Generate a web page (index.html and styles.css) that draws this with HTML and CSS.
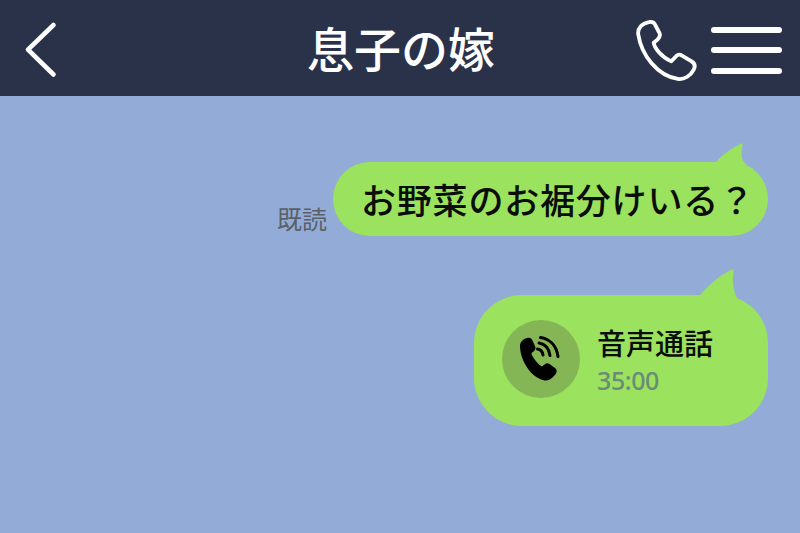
FILE: index.html
```html
<!DOCTYPE html>
<html lang="ja">
<head>
<meta charset="utf-8">
<title>息子の嫁</title>
<link rel="stylesheet" href="styles.css">
</head>
<body>
<div class="app">
  <header class="header">
    <svg class="back" width="34" height="58" viewBox="0 0 34 58"><path d="M29.500 4 L4 28.700 L29.500 53.500" fill="none" stroke="#fff" stroke-width="4.600" stroke-linecap="round" stroke-linejoin="round"/></svg>
    <h1 class="title">息子の嫁</h1>
    <div class="actions">
      <svg class="call" width="64" height="62" viewBox="0 0 60 60" preserveAspectRatio="none"><path d="M4 14 C3 8 8 3 14 2 C17 1.500 19 2.500 20 5 L24 13 C25 15.500 24 17 22 19 L18.500 22 C19 27 26 36 35 40 L39.500 35 C41 33.500 43 33 45 34.500 L54 40 C57 42 57.500 45 56 48 C53 54 47 58 41 57 C22 54 7 34 4 14 Z" fill="none" stroke="#fff" stroke-width="3.600" stroke-linejoin="round"/></svg>
      <div class="menu"><span class="bar"></span><span class="bar"></span><span class="bar"></span></div>
    </div>
  </header>
  <main class="chat">
    <div class="row">
      <span class="read">既読</span>
      <div class="bubble text-bubble">
        <svg class="tail" width="40" height="30" viewBox="0 0 40 30"><path d="M2 19 C8 12 18 5 26 1 C28 0 29 1 28.500 3 C27 9 27 15 30 19 C32 22 35 24 40 26 L2 30 Z" fill="#9be25e"/></svg>
        <p class="msg">お野菜のお裾分けいる？</p>
      </div>
    </div>
    <div class="row">
      <div class="bubble call-bubble">
        <svg class="tail" width="50" height="50" viewBox="0 0 50 50"><path d="M2 27 C10 18 22 7 33 2 C35 1 36 2 35.500 4 C34 12 35 20 38 28 C40 32 44 36 48 40 L2 45 Z" fill="#9be25e"/></svg>
        <div class="call-icon">
          <svg width="46" height="46" viewBox="0 0 46 46">
            <path d="M2 10 C2 6 5 3 9 2 C12 1 13.500 2.500 14.500 4.500 L17 10 C18 12 17.500 14 15.500 15.500 L13.500 17 C13.500 20 20 29 24 30.500 L26.500 28.500 C28.500 27 30 27 31.500 28 L37 32 C39 33.500 39 35.500 38 37.500 C35 42 31 45 26.500 44.500 C13 42 2 24 2 10 Z" fill="#000"/>
            <g fill="none" stroke="#000" stroke-width="3" stroke-linecap="round">
              <path d="M19.500 13 C22.500 13.500 24.500 15.500 25 19"/>
              <path d="M21 7 C27 8 31 12.500 32 19.500"/>
              <path d="M22.500 1.500 C32 3 38.500 10 40 20.500"/>
            </g>
          </svg>
        </div>
        <div class="call-info">
          <span class="call-label">音声通話</span>
          <span class="call-time">35:00</span>
        </div>
      </div>
    </div>
  </main>
</div>
</body>
</html>
```
FILE: styles.css
```css
* { box-sizing: border-box; margin: 0; padding: 0; }
html, body { width: 800px; height: 533px; overflow: hidden; }
body { font-family: "Noto Sans CJK JP", "Noto Sans", sans-serif; background: #93acd7; }
.app { width: 800px; height: 533px; display: flex; flex-direction: column; }
.header {
  height: 96px; flex: none; background: #2a3249; color: #fff;
  display: grid; grid-template-columns: 1fr auto 1fr; align-items: center;
  padding: 0 18px 0 20px;
}
.back { display: block; margin-top: 3px; margin-left: 4px; }
.title { font-size: 47px; font-weight: 500; line-height: 1; margin-top: -4px; }
.actions { display: flex; align-items: center; gap: 13px; justify-self: end; }
.call { display: block; margin-top: 5px; }
.menu { width: 71px; height: 47px; margin-top: 4px; display: flex; flex-direction: column; justify-content: space-between; }
.bar { display: block; height: 6px; border-radius: 3px; background: #fff; }
.chat { flex: 1; display: flex; flex-direction: column; align-items: flex-end; padding: 66px 32px 0 0; gap: 59px; }
.row { display: flex; align-items: flex-end; gap: 6px; }
.read { font-size: 25px; line-height: 1; color: #5b6068; margin-bottom: 5px; }
.bubble { background: #9be25e; position: relative; }
.text-bubble { width: 435px; height: 74px; border-radius: 37px; display: flex; align-items: center; padding-left: 28px; padding-bottom: 2px; }
.msg { font-size: 35px; line-height: 1; color: #0a0d08; white-space: nowrap; font-weight: 500; letter-spacing: 0.8px; }
.tail { position: absolute; display: block; }
.text-bubble .tail { top: -19px; left: 381px; }
.call-bubble { width: 294px; height: 131px; border-radius: 48px; display: flex; align-items: center; padding-left: 28px; gap: 17px; }
.call-bubble .tail { top: -27px; left: 224px; }
.call-icon { width: 78px; height: 78px; border-radius: 50%; background: #85b656; display: flex; align-items: center; justify-content: center; margin-top: -3px; }
.call-info { display: flex; flex-direction: column; gap: 7px; margin-top: -1px; }
.call-label { font-size: 29px; line-height: 34px; color: #0a0d08; font-weight: 500; margin-top: -1px; }
.call-time { font-size: 25px; line-height: 28px; color: #6b8a78; font-weight: 500; letter-spacing: -0.4px; font-family: "Noto Sans", sans-serif; }
```
